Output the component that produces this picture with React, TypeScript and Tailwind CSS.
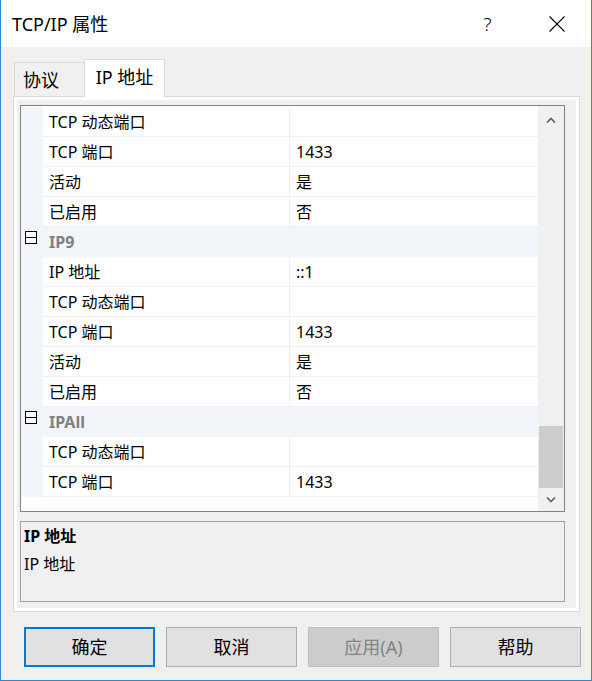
import React from "react";

type Row = { name?: string; value?: string; cat?: string };

const rows: Row[] = [
  { name: "TCP 动态端口", value: "" },
  { name: "TCP 端口", value: "1433" },
  { name: "活动", value: "是" },
  { name: "已启用", value: "否" },
  { cat: "IP9" },
  { name: "IP 地址", value: "::1" },
  { name: "TCP 动态端口", value: "" },
  { name: "TCP 端口", value: "1433" },
  { name: "活动", value: "是" },
  { name: "已启用", value: "否" },
  { cat: "IPAll" },
  { name: "TCP 动态端口", value: "" },
  { name: "TCP 端口", value: "1433" },
];

function Chevron({ up }: { up?: boolean }) {
  return (
    <svg width="10" height="7" viewBox="0 0 10 7">
      <polyline
        points={up ? "1,5.5 5,1.5 9,5.5" : "1,1.5 5,5.5 9,1.5"}
        fill="none"
        stroke="#606060"
        strokeWidth="1.7"
      />
    </svg>
  );
}

function Collapse() {
  return (
    <svg width="12" height="13" viewBox="0 0 12 13">
      <rect x="0.5" y="0.5" width="11" height="12" fill="white" stroke="black" strokeWidth="1" />
      <line x1="0" y1="6.5" x2="12" y2="6.5" stroke="black" strokeWidth="1" />
    </svg>
  );
}

function GridRow({ row }: { row: Row }) {
  if (row.cat) {
    return (
      <div className="flex h-[30px] bg-[#f2f5fa]">
        <div className="w-[22px] shrink-0 pl-[4px] pt-[4px]">
          <Collapse />
        </div>
        <div className="flex items-center pl-[6px] text-[16px] font-bold text-[#808080]">{row.cat}</div>
      </div>
    );
  }
  return (
    <div className="flex h-[30px]">
      <div className="w-[22px] shrink-0 bg-[#f2f5fa]" />
      <div className="flex w-[247px] items-center border-b border-r border-[#f0f0f0] pl-[6px]">{row.name}</div>
      <div className="flex flex-1 items-center border-b border-[#f0f0f0] pl-[6px]">{row.value}</div>
    </div>
  );
}

export default function App() {
  return (
    <div className="flex h-[681px] w-[592px] flex-col border-x border-b border-[#2b88d8] bg-[#f0f0f0] text-[16px] leading-[22px] text-black font-[family-name:'Noto_Sans','Noto_Sans_CJK_SC',sans-serif]">
      {/* title bar */}
      <div className="flex h-[47px] shrink-0 items-center bg-white">
        <span className="pl-[11px] text-[18px]">TCP/IP 属性</span>
        <div className="ml-auto flex h-full w-[69px] items-center justify-center text-[19px] font-light">?</div>
        <div className="flex h-full w-[69px] items-center justify-center">
          <svg width="16" height="16" viewBox="0 0 16 16">
            <line x1="0.5" y1="0.5" x2="15.5" y2="15.5" stroke="black" strokeWidth="1.1" />
            <line x1="15.5" y1="0.5" x2="0.5" y2="15.5" stroke="black" strokeWidth="1.1" />
          </svg>
        </div>
      </div>

      {/* tabs */}
      <div className="flex h-[49px] shrink-0 items-end pl-[13px]">
        <div className="flex h-[34px] w-[70px] items-center border-l border-t border-[#d9d9d9] pl-[8px] text-[18px]">协议</div>
        <div className="relative z-10 -mb-px flex h-[38px] w-[81px] items-center justify-center border-x border-t border-[#d9d9d9] bg-white pb-[4px] text-[18px]">
          IP 地址
        </div>
      </div>

      {/* tab page */}
      <div className="ml-[12px] h-[516px] w-[567px] shrink-0 border border-[#d9d9d9] bg-white p-[3px]">
        <div className="flex h-full flex-col bg-[#f0f0f0] pl-[3px] pr-[11px] pt-[5px]">
          <div className="flex h-[407px] shrink-0 border border-[#828282] bg-white">
            <div className="flex-1 pt-px">
              {rows.map((r, i) => (
                <GridRow key={i} row={r} />
              ))}
            </div>
            <div className="flex w-[26px] shrink-0 flex-col bg-[#f0f0f0]">
              <div className="flex h-[28px] items-center justify-center">
                <Chevron up />
              </div>
              <div className="flex flex-1 flex-col justify-end px-px">
                <div className="h-[62px] bg-[#cdcdcd]" />
              </div>
              <div className="flex h-[23px] items-center justify-center">
                <Chevron />
              </div>
            </div>
          </div>
          <div className="mt-[9px] h-[81px] border border-[#a0a0a0] pl-[3px] leading-[28px]">
            <div className="font-bold">IP 地址</div>
            <div>IP 地址</div>
          </div>
        </div>
      </div>

      {/* buttons */}
      <div className="mt-[15px] flex gap-[11px] pl-[23px] text-[18px]">
        <button className="flex h-[40px] w-[131px] items-center justify-center border-2 border-[#0078d7] bg-[#e1e1e1]">确定</button>
        <button className="flex h-[40px] w-[131px] items-center justify-center border border-[#adadad] bg-[#e1e1e1]">取消</button>
        <button className="flex h-[40px] w-[131px] items-center justify-center border border-[#bfbfbf] bg-[#cccccc] text-[#838383]">应用(A)</button>
        <button className="flex h-[40px] w-[131px] items-center justify-center border border-[#adadad] bg-[#e1e1e1]">帮助</button>
      </div>
    </div>
  );
}
